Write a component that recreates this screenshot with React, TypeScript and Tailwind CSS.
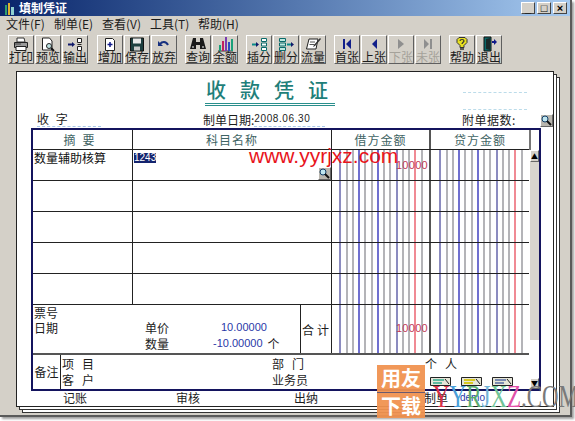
const cjk = `[font-family:'Noto_Sans_CJK_SC','Liberation_Sans',sans-serif]`

function Printer() {
  return (
    <svg width="16" height="15" viewBox="0 0 16 15">
      <path d="M4 1h7l1 4H4z" fill="#fff" stroke="#333" />
      <path d="M1.500 5.500h13v5h-13z" fill="#9a9a9a" stroke="#222" />
      <path d="M3 9.500h10v4H3z" fill="#fff" stroke="#222" />
      <path d="M2 7h6" stroke="#444" />
    </svg>
  )
}

function Preview() {
  return (
    <svg width="16" height="15" viewBox="0 0 16 15">
      <path d="M2.500 1h7l2.500 3v9h-9.500z" fill="#fff" stroke="#222" />
      <circle cx="9" cy="9" r="2.500" fill="#bfe3e3" stroke="#222" />
      <path d="M11 11l3 3" stroke="#111" strokeWidth="2" />
    </svg>
  )
}

function Output() {
  return (
    <svg width="16" height="15" viewBox="0 0 16 15">
      <path d="M1 7.500h4" stroke="#111a6a" strokeWidth="2" />
      <path d="M5 5l3 2.500L5 10z" fill="#111a6a" />
      <path d="M10.500 1.500h4v4h-4zM10.500 9.500h4v4h-4z" fill="#fff" stroke="#222" />
      <path d="M10.500 7.500h4" stroke="#222" />
    </svg>
  )
}

function Add() {
  return (
    <svg width="16" height="15" viewBox="0 0 16 15">
      <path d="M3.500 1.500h7l2 2v10h-9z" fill="#fff" stroke="#222" />
      <path d="M8 5v5M5.500 7.500h5" stroke="#111a8a" strokeWidth="1.500" />
    </svg>
  )
}

function Floppy() {
  return (
    <svg width="16" height="15" viewBox="0 0 16 15">
      <path d="M1.500 1h13v13h-13z" fill="#1d3f3f" stroke="#111" />
      <path d="M4 1.500h8v5H4z" fill="#e8e8e8" />
      <path d="M5 9.500h6v4H5z" fill="#c8c8c8" />
    </svg>
  )
}

function Undo() {
  return (
    <svg width="16" height="15" viewBox="0 0 16 15">
      <path d="M4 7c2-2.500 6-3 8 1" fill="none" stroke="#16307f" strokeWidth="2" />
      <path d="M2 4v5h5z" fill="#16307f" />
    </svg>
  )
}

function Binoculars() {
  return (
    <svg width="18" height="15" viewBox="0 0 18 15">
      <path d="M4 1h3v4h4V1h3l3 11h-6V8H7v4H1z" fill="#1a1a1a" />
      <path d="M3 9h2v2H3zM13 9h2v2h-2z" fill="#8a8a8a" />
    </svg>
  )
}

function Bars() {
  return (
    <svg width="17" height="16" viewBox="0 0 17 16">
      <path d="M1 15h15" stroke="#333" />
      <path d="M2 9h2v6H2z" fill="#1aa07a" />
      <path d="M5 5h2v10H5z" fill="#c02060" />
      <path d="M8 1h2v14H8z" fill="#7a3ab0" />
      <path d="M11 6h2v9h-2z" fill="#2a4ac0" />
      <path d="M14 3h2v12h-2z" fill="#1aa07a" />
    </svg>
  )
}

function InsertRow() {
  return (
    <svg width="17" height="15" viewBox="0 0 17 15">
      <path d="M1 7.500h4" stroke="#0a8a8a" strokeWidth="2" />
      <path d="M5 5l3 2.500L5 10z" fill="#111a6a" />
      <path d="M10.500 1.500h5v3h-5zM10.500 6h5v3h-5zM10.500 10.500h5v3h-5z" fill="#fff" stroke="#0a6a6a" />
    </svg>
  )
}

function DeleteRow() {
  return (
    <svg width="17" height="15" viewBox="0 0 17 15">
      <path d="M1.500 1.500h6v3h-6zM1.500 6h6v3h-6zM1.500 10.500h6v3h-6z" fill="#bfe8e0" stroke="#0a6a6a" />
      <path d="M9 7.500h4" stroke="#0a8a8a" strokeWidth="2" />
      <path d="M13 5l3 2.500L13 10z" fill="#111a6a" />
    </svg>
  )
}

function Book() {
  return (
    <svg width="17" height="15" viewBox="0 0 17 15">
      <path d="M4 2h9l-2 10H1.500z" fill="#fff" stroke="#222" />
      <path d="M5 5h5M4.500 7.500h5" stroke="#555" />
      <path d="M15 1l1 1-6 7-2 1 1-2z" fill="#333" />
    </svg>
  )
}

function Nav({ kind, off }: { kind: 'first' | 'prev' | 'next' | 'last'; off?: boolean }) {
  const c = off ? '#8f8f8f' : '#111f8a'
  return (
    <svg width="12" height="14" viewBox="0 0 12 14">
      {kind === 'first' && <path d="M2 2h2v10H2zM10 2v10L5 7z" fill={c} />}
      {kind === 'prev' && <path d="M9 2v10L4 7z" fill={c} />}
      {kind === 'next' && <path d="M3 2v10l6-5z" fill={c} />}
      {kind === 'last' && <path d="M2 2v10l5-5zM8 2h2v10H8z" fill={c} />}
    </svg>
  )
}

function Hint() {
  return (
    <svg width="16" height="16" viewBox="0 0 16 16">
      <path d="M5 1.500h6l2 2v3l-3 3v2H6v-2l-3-3v-3z" fill="#e8e020" stroke="#333" />
      <path d="M6 5c0-2 4-2 4 0 0 1-2 1.500-2 3" fill="none" stroke="#333" strokeWidth="1.200" />
      <path d="M6 13h4" stroke="#333" strokeWidth="1.500" />
    </svg>
  )
}

function Exit() {
  return (
    <svg width="17" height="16" viewBox="0 0 17 16">
      <path d="M3 1h7v14H3z" fill="#0a6a6a" stroke="#111" />
      <path d="M5 3l4-1v12l-4-1z" fill="#1a2a2a" />
      <path d="M11 6h3" stroke="#111a8a" strokeWidth="2" />
      <path d="M13 3l3 3-3 3z" fill="#111a8a" />
    </svg>
  )
}

function ToolButton({ label, icon, off }: { label: string; icon: React.ReactNode; off?: boolean }) {
  return (
    <div
      className={`flex h-[29px] w-[26px] flex-col items-center border border-t-white border-l-white border-r-[#5f5f5f] border-b-[#5f5f5f] pt-[1px] text-[12px] leading-[12px] ${off ? 'text-[#a5a29a]' : 'text-[#1c1c1c]'}`}
    >
      <span className="flex h-[14px] items-center">{icon}</span>
      <span className="whitespace-nowrap">{label}</span>
    </div>
  )
}

function Lens() {
  return (
    <div className="flex h-[13px] w-[13px] items-center justify-center bg-[#b9b6ae] border border-t-white border-l-white border-r-[#666] border-b-[#666]">
      <svg width="11" height="11" viewBox="0 0 11 11">
        <circle cx="4" cy="4" r="3" fill="#bfe6f0" stroke="#14406a" />
        <path d="M6 6l4 4" stroke="#111" strokeWidth="2" />
      </svg>
    </div>
  )
}

const grid = 'border-[#b4b4b8]'
const blue = 'border-[#8c8cc0]'
const navy = 'border-[#7070d0]'
const red = 'border-[#f08a94]'
const lineColors = [blue, grid, grid, navy, grid, grid, navy, grid, grid, blue, grid, grid, red, grid]

function Ledger({ lead, amount, amountTop }: { lead: string; amount?: string; amountTop?: string }) {
  return (
    <div className={`relative flex h-full ${lead}`}>
      {lineColors.map((c, i) => (
        <div key={i} className={`w-[6.25px] shrink-0 border-r-2 ${c}`} />
      ))}
      {amount && (
        <span className={`absolute right-[1px] font-['Liberation_Sans'] text-[11px] leading-[12px] tracking-[0.3px] text-[#c23a58] ${amountTop}`}>
          {amount}
        </span>
      )}
    </div>
  )
}

function Row({ left, amount }: { left?: React.ReactNode; amount?: string }) {
  return (
    <div className="grid h-[31px] grid-cols-[100px_199px_99px_98px] border-b border-[#222]">
      {left ?? (
        <>
          <div className="border-r border-[#222]" />
          <div className="border-r border-[#222]" />
        </>
      )}
      <div className="border-r-2 border-[#555]">
        <Ledger lead="pl-[3px]" amount={amount} amountTop="top-[9px]" />
      </div>
      <Ledger lead="pl-[4px]" />
    </div>
  )
}

function SmallDoc({ accent }: { accent: string }) {
  return (
    <svg width="21" height="9" viewBox="0 0 21 9">
      <path d="M.5.500h20v8H.5z" fill="#e6e6d8" stroke="#222" />
      <path d="M3 3h11M3 6h9" stroke={accent} strokeWidth="2" />
      <path d="M15 2l4 5" stroke="#222" />
    </svg>
  )
}

export default function App() {
  return (
    <div className={`relative h-[421px] w-[575px] overflow-hidden bg-white text-[12px] text-[#1c1c1c] ${cjk}`}>
      <div className="flex h-[417px] w-[572px] flex-col border-r-2 border-b-2 border-[#5a5a5a] bg-[#d4d0c8] shadow-[2px_2px_2px_#a0a0a0]">
        {/* title bar */}
        <div className="flex h-[16px] items-center bg-gradient-to-r from-[#0a246a] to-[#a6caf0] pl-[4px] pr-[3px]">
          <svg width="11" height="13" viewBox="0 0 11 13">
            <path d="M1 3h2v10H1z" fill="#2f9f6f" />
            <path d="M4 1h2v12H4z" fill="#e0b030" />
            <path d="M7 5h3v8H7z" fill="#8fd0d0" />
          </svg>
          <span className="ml-[4px] text-[12px] font-bold leading-[14px] text-white">填制凭证</span>
          <div className="ml-auto flex items-center">
            {['_', '□', '×'].map((g, i) => (
              <span
                key={g}
                className={`flex h-[12px] w-[14px] items-center justify-center border border-t-white border-l-white border-r-[#444] border-b-[#444] bg-[#d4d0c8] font-['Liberation_Sans'] text-[11px] font-bold leading-none text-black ${i ? 'ml-[2px]' : ''}`}
              >
                {g}
              </span>
            ))}
          </div>
        </div>

        {/* menu */}
        <div className="flex h-[18px] items-center pb-[3px] pl-[6px] text-[12px] leading-[14px]">
          {['文件(F)', '制单(E)', '查看(V)', '工具(T)', '帮助(H)'].map(m => (
            <span key={m} className="w-[48px] whitespace-nowrap">{m}</span>
          ))}
        </div>

        {/* toolbar */}
        <div className="flex h-[31px] items-start pl-[8px] pt-[1px]">
          <div className="flex gap-[1px]">
            <ToolButton label="打印" icon={<Printer />} />
            <ToolButton label="预览" icon={<Preview />} />
            <ToolButton label="输出" icon={<Output />} />
          </div>
          <div className="ml-[9px] flex gap-[1px]">
            <ToolButton label="增加" icon={<Add />} />
            <ToolButton label="保存" icon={<Floppy />} />
            <ToolButton label="放弃" icon={<Undo />} />
          </div>
          <div className="ml-[8px] flex gap-[1px]">
            <ToolButton label="查询" icon={<Binoculars />} />
            <ToolButton label="余额" icon={<Bars />} />
          </div>
          <div className="ml-[8px] flex gap-[1px]">
            <ToolButton label="插分" icon={<InsertRow />} />
            <ToolButton label="删分" icon={<DeleteRow />} />
            <ToolButton label="流量" icon={<Book />} />
          </div>
          <div className="ml-[8px] flex gap-[1px]">
            <ToolButton label="首张" icon={<Nav kind="first" />} />
            <ToolButton label="上张" icon={<Nav kind="prev" />} />
            <ToolButton label="下张" icon={<Nav kind="next" off />} off />
            <ToolButton label="未张" icon={<Nav kind="last" off />} off />
          </div>
          <div className="ml-[8px] flex gap-[1px]">
            <ToolButton label="帮助" icon={<Hint />} />
            <ToolButton label="退出" icon={<Exit />} />
          </div>
        </div>

        {/* voucher */}
        <div className="ml-[16px] mt-[6px] h-[336px] w-[538px] border border-[#222] bg-white shadow-[3px_3px_0_-1px_#fff,3px_3px_0_0_#333,6px_6px_0_-1px_#fff,6px_6px_0_0_#333]">
          <div className="flex h-[37px]">
            <div className="ml-[188px] mt-[5px] h-[29px] w-[130px] border-b-[3px] border-double border-[#2a8f8c] pl-[1px] text-[20px] font-medium leading-[26px] tracking-[14px] whitespace-nowrap text-[#1f7f7a]">
              收款凭证
            </div>
            <div className="ml-[128px] mt-[20px] h-[18px] w-[64px] border-y border-dashed border-[#bcdcea]" />
          </div>
          <div className="flex h-[19px] items-end pb-[1px]">
            <div className="w-[186px] pl-[20px]">
              <span className="block w-[64px] border-b border-dashed border-[#a8c8ea] text-[12px] leading-[15px] tracking-[2px]">收 字</span>
            </div>
            <div className="flex w-[259px] items-end text-[12px] leading-[15px]">
              <span>制单日期:</span>
              <span className="w-[71px] border-b border-dashed border-[#a8c8ea] font-['Liberation_Sans'] text-[10px] tracking-[0.6px]">2008.06.30</span>
            </div>
            <span className="w-[78px] text-[12px] leading-[15px] tracking-[0.5px]">附单据数:</span>
            <Lens />
          </div>

          {/* table */}
          <div className="ml-[14px] flex h-[263px] w-[510px] border-2 border-[#14145e]">
            <div className="flex w-[496px] flex-col">
              <div className="grid h-[20px] grid-cols-[100px_199px_99px_98px] border-b border-[#222] text-center text-[12px] leading-[19px] tracking-[1px] text-[#3f6464]">
                <div className="border-r border-[#222] tracking-[7px]">摘要</div>
                <div className="border-r border-[#222]">科目名称</div>
                <div className="border-r-2 border-[#555]">借方金额</div>
                <div>贷方金额</div>
              </div>
              <Row
                amount="10000"
                left={
                  <>
                    <div className="border-r border-[#222] pl-[1px] text-[12px] leading-[15px] text-[#111]">数量辅助核算</div>
                    <div className="flex flex-col justify-between border-r border-[#222] pl-[1px] pt-[3px]">
                      <span className="w-[22px] bg-[#14246e] text-center font-['Liberation_Sans'] text-[10px] leading-[10px] text-white">1243</span>
                      <span className="self-end"><Lens /></span>
                    </div>
                  </>
                }
              />
              <Row />
              <Row />
              <Row />
              <Row />
              <div className="grid h-[50px] grid-cols-[299px_99px_98px] border-b-2 border-[#555]">
                <div className="grid grid-cols-[112px_155px_32px] text-[12px] leading-[15px]">
                  <div className="pl-[1px]">
                    <div>票号</div>
                    <div>日期</div>
                  </div>
                  <div className="pt-[15px]">
                    <div className="flex h-[16px]">
                      <span className="w-[76px]">单价</span>
                      <span className="font-['Liberation_Sans'] text-[11px] text-[#2a38a8]">10.00000</span>
                    </div>
                    <div className="flex h-[16px]">
                      <span className="w-[68px]">数量</span>
                      <span className="font-['Liberation_Sans'] text-[11px] text-[#2a38a8]">-10.00000</span>
                      <span className="ml-[5px]">个</span>
                    </div>
                  </div>
                  <div className="flex items-center border-l border-r border-[#222] pl-[1px] tracking-[3px] whitespace-nowrap">合计</div>
                </div>
                <div className="border-r-2 border-[#555]">
                  <Ledger lead="pl-[3px]" amount="10000" amountTop="top-[17px]" />
                </div>
                <Ledger lead="pl-[4px]" />
              </div>
              <div className="flex flex-1 text-[12px] leading-[16px]">
                <div className="flex w-[28px] items-center justify-center border-r border-[#222]">备注</div>
                <div className="w-[211px] pl-[1px] pt-[1px] tracking-[8px]">
                  <div>项目</div>
                  <div>客户</div>
                </div>
                <div className="w-[153px] pt-[1px]">
                  <div className="tracking-[8px]">部门</div>
                  <div>业务员</div>
                </div>
                <div className="flex flex-col pt-[1px]">
                  <div className="tracking-[8px]">个人</div>
                  <div className="mt-[5px] ml-[5px] flex gap-[10px]">
                    <SmallDoc accent="#5fb8a0" />
                    <SmallDoc accent="#d8c820" />
                    <SmallDoc accent="#7a8ab0" />
                  </div>
                </div>
              </div>
            </div>
            <div className="flex flex-1 flex-col">
              <div className="h-[20px] border-l-2 border-[#777]" />
              <div className="flex flex-1 flex-col pl-[1px] pr-[1px]">
                <div className="flex h-[12px] items-center justify-center border border-t-white border-l-white border-r-[#666] border-b-[#666] bg-[#d4d0c8] text-[7px] leading-none text-black">▲</div>
                <div className="h-[178px] bg-[#d8d5ce]" />
                <div className="flex-1 bg-white" />
                <div className="flex h-[11px] items-center justify-center border border-t-white border-l-white border-r-[#666] border-b-[#666] bg-[#d4d0c8] text-[7px] leading-none text-black">▼</div>
              </div>
            </div>
          </div>

          {/* signatures */}
          <div className="-mt-[1px] flex text-[12px] leading-[15px]">
            <span className="ml-[46px] w-[113px]">记账</span>
            <span className="w-[118px]">审核</span>
            <span className="w-[130px]">出纳</span>
            <span className="w-[36px]">制单</span>
            <span className="font-['Liberation_Sans'] text-[10px] text-[#2a38a8]">demo</span>
          </div>
        </div>
      </div>

      {/* pasted-on watermarks */}
      <div className="absolute top-[146px] left-[249px] font-['Liberation_Sans'] text-[21px] leading-[20px] whitespace-nowrap text-[#e8141c]">
        www.yyrjxz.com
      </div>
      <div className="absolute top-[365px] left-[377px] flex h-[53px] w-[48px] flex-col items-center bg-[#f09250]/95 text-[20px] font-bold leading-[26px] text-white">
        <span className="h-[26px]">用友</span>
        <span className="mt-[1px] w-full border-t border-[#6a5a70] text-center">下载</span>
      </div>
      <div className="absolute top-[382px] left-[433px] origin-left scale-x-[0.74] font-['Liberation_Serif'] text-[31px] leading-[30px] whitespace-nowrap text-[#7a7a7a]">
        <span className="text-[#d83048]">Y</span>
        <span className="text-[#4a9ed8]">Y</span>
        <span className="text-[#5aac70]">R</span>
        <span className="text-[#74b4d8]">J</span>
        <span className="text-[#70c498]">X</span>
        <span className="text-[#e050a8]">Z</span>
        .COM
      </div>
    </div>
  )
}
